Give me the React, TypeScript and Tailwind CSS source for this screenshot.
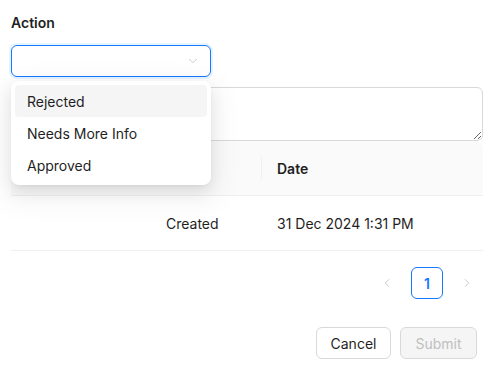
import { ChevronDown, ChevronLeft, ChevronRight } from 'lucide-react';

const options = ['Rejected', 'Needs More Info', 'Approved'];

export default function App() {
  return (
    <div
      className="relative w-[498px] h-[372px] bg-white text-[14px] text-[#1f1f1f] overflow-hidden"
      style={{ fontFamily: 'Inter, "Noto Sans", sans-serif' }}
    >
      <div className="px-[11px] pt-[12px]">
        <label className="block h-[22px] leading-[22px] font-semibold">Action</label>

        <div className="mt-[11px] w-[200px] h-[32px] rounded-md border border-[#1677ff] shadow-[0_0_0_2px_rgba(5,145,255,0.1)] flex items-center justify-end pr-[10px]">
          <ChevronDown size={14} strokeWidth={1.5} className="text-[#c4c4c4]" />
        </div>

        <textarea
          className="mt-[10px] block w-[472px] h-[54px] rounded-md border border-[#d9d9d9] px-[11px] py-[4px] outline-none"
          defaultValue=""
        />

        <div className="w-[472px]">
          <div className="flex h-[55px] bg-[#fafafa] rounded-t-lg border-b border-[#f0f0f0] font-semibold">
            <div className="w-[139px]" />
            <div className="w-[111px] flex items-center px-4">Status</div>
            <div className="flex-1 flex items-center relative px-4">
              <span className="absolute left-0 top-1/2 -translate-y-1/2 w-px h-[22px] bg-[#f0f0f0]" />
              Date
            </div>
          </div>
          <div className="flex h-[55px] border-b border-[#f0f0f0]">
            <div className="w-[139px]" />
            <div className="w-[111px] flex items-center px-4">Created</div>
            <div className="flex-1 flex items-center px-4">31 Dec 2024 1:31 PM</div>
          </div>
        </div>

        <div className="mt-[16px] flex items-center justify-end gap-2 w-[472px]">
          <div className="w-8 h-8 flex items-center justify-center text-[#c4c4c4]">
            <ChevronLeft size={14} strokeWidth={1.5} />
          </div>
          <div className="w-8 h-8 rounded-md border border-[#1677ff] flex items-center justify-center text-[#1677ff] font-semibold">
            1
          </div>
          <div className="w-8 h-8 flex items-center justify-center text-[#c4c4c4]">
            <ChevronRight size={14} strokeWidth={1.5} />
          </div>
        </div>

        <div className="mt-[28px] flex justify-end gap-[9px] w-[466px]">
          <button className="h-8 w-[75px] rounded-md border border-[#d9d9d9] bg-white text-[#1f1f1f]">
            Cancel
          </button>
          <button className="h-8 w-[77px] rounded-md border border-[#d9d9d9] bg-[#f5f5f5] text-[#bfbfbf]">
            Submit
          </button>
        </div>
      </div>

      <div className="absolute left-[11px] top-[81px] w-[200px] p-1 rounded-lg bg-white shadow-[0_6px_16px_0_rgba(0,0,0,0.08),0_3px_6px_-4px_rgba(0,0,0,0.12),0_9px_28px_8px_rgba(0,0,0,0.05)]">
        {options.map((o, i) => (
          <div
            key={o}
            className={`h-8 flex items-center px-3 rounded ${i === 0 ? 'bg-[#f5f5f5]' : ''}`}
          >
            {o}
          </div>
        ))}
      </div>
    </div>
  );
}
